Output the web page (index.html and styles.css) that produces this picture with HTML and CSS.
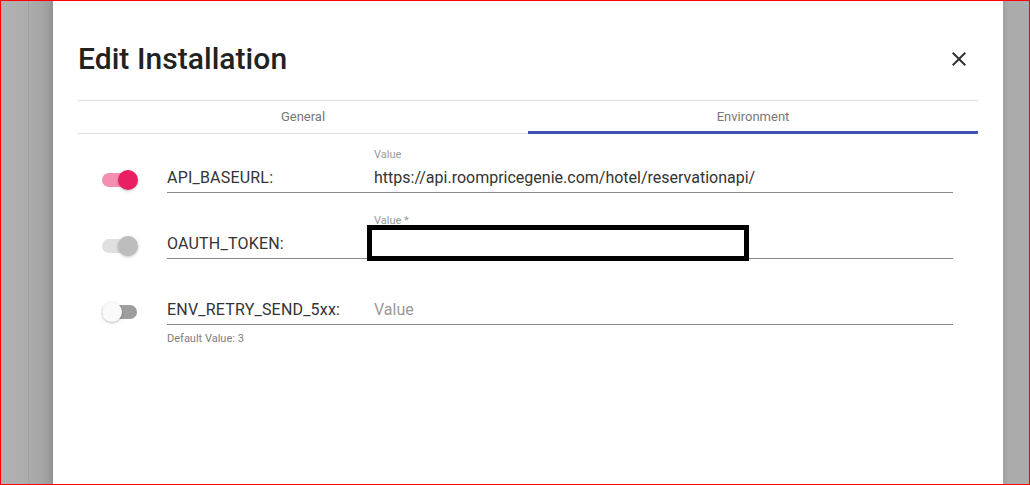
FILE: index.html
```html
<!DOCTYPE html>
<html>
<head>
<meta charset="utf-8">
<link rel="stylesheet" href="styles.css">
</head>
<body>
<div class="frame">
  <div class="dialog">
    <div class="header">
      <h1 class="title">Edit Installation</h1>
      <button class="close" aria-label="Close">
        <svg width="24" height="24" viewBox="0 0 24 24"><path fill="#333" d="M19 6.41L17.59 5 12 10.59 6.41 5 5 6.41 10.59 12 5 17.59 6.41 19 12 13.41 17.59 19 19 17.59 13.41 12z"/></svg>
      </button>
    </div>
    <div class="tabs">
      <div class="tab">General</div>
      <div class="tab active">Environment</div>
    </div>
    <div class="rows">
      <div class="row">
        <div class="switch on"><span class="track"></span><span class="thumb"></span></div>
        <div class="field">
          <div class="name"><span class="name-text">API_BASEURL:</span></div>
          <div class="value">
            <div class="small">Value</div>
            <div class="input">https://api.roompricegenie.com/hotel/reservationapi/</div>
          </div>
        </div>
      </div>
      <div class="row">
        <div class="switch disabled"><span class="track"></span><span class="thumb"></span></div>
        <div class="field">
          <div class="name"><span class="name-text">OAUTH_TOKEN:</span></div>
          <div class="value">
            <div class="small">Value *</div>
            <div class="input"></div>
            <div class="redact"></div>
          </div>
        </div>
      </div>
      <div class="row">
        <div class="switch off"><span class="track"></span><span class="thumb"></span></div>
        <div class="field">
          <div class="name"><span class="name-text">ENV_RETRY_SEND_5xx:</span></div>
          <div class="value">
            <div class="small"></div>
            <div class="input placeholder">Value</div>
          </div>
        </div>
      </div>
      <div class="helper">Default Value: 3</div>
    </div>
  </div>
</div>
</body>
</html>
```
FILE: styles.css
```css
* { box-sizing: border-box; }
html, body { margin: 0; padding: 0; }
body { font-family: Roboto, "Liberation Sans", sans-serif; }

.frame {
  width: 1030px;
  height: 485px;
  border: 1px solid #ff0000;
  overflow: hidden;
  padding-left: 52px;
  background:
    linear-gradient(to right,
      #b1b1b1 0px, #adadad 27px, #a2a2a2 27px, #a2a2a2 28px,
      #acacac 28px, #a6a6a6 40px, #9a9a9a 52px,
      #9a9a9a 952px, #a6a6a6 965px, #ababab 978px);
}

.dialog {
  width: 950px;
  height: 100%;
  background: #fff;
  padding: 38px 25px 0 25px;
  box-shadow: 0 0 6px rgba(0,0,0,0.15);
}

.header {
  display: flex;
  align-items: center;
  justify-content: space-between;
  height: 40px;
}
.title {
  margin: 0;
  font-size: 30px;
  line-height: 40px;
  font-weight: 500;
  color: #222;
  letter-spacing: 0.05px;
}
.close {
  border: 0;
  background: none;
  padding: 0;
  width: 24px;
  height: 24px;
  margin-right: 7px;
  display: flex;
}

.tabs {
  margin-top: 21px;
  display: flex;
  border-top: 1px solid #e0e0e0;
  border-bottom: 1px solid #e0e0e0;
}
.tab {
  flex: 1;
  height: 32px;
  padding-bottom: 2px;
  display: flex;
  align-items: center;
  justify-content: center;
  font-size: 13px;
  color: #777;
  position: relative;
}
.tab.active::after {
  content: "";
  position: absolute;
  left: 0;
  right: 0;
  bottom: -1px;
  height: 3px;
  background: #3f51b5;
}

.rows {
  padding: 13px 25px 0 24px;
  display: flex;
  flex-direction: column;
  gap: 20px;
}
.row {
  display: flex;
  align-items: flex-end;
}

.switch {
  position: relative;
  width: 36px;
  height: 20px;
  margin-bottom: 3px;
  margin-right: 29px;
  flex: none;
}
.switch .track {
  position: absolute;
  left: 0;
  top: 3px;
  width: 35px;
  height: 14px;
  border-radius: 7px;
}
.switch .thumb {
  position: absolute;
  top: 0;
  width: 20px;
  height: 20px;
  border-radius: 50%;
  box-shadow: 0 1px 3px rgba(0,0,0,0.25);
}
.switch.on .track { background: #f48fb1; }
.switch.on .thumb { left: 16px; background: #e91e63; }
.switch.disabled .track { background: #e0e0e0; }
.switch.disabled .thumb { left: 16px; background: #bdbdbd; }
.switch.off .track { background: #9e9e9e; }
.switch.off .thumb { left: 0; background: #fafafa; }

.field {
  flex: 1;
  display: flex;
  border-bottom: 1px solid #8a8a8a;
}
.name {
  width: 207px;
  flex: none;
  padding-top: 16px;
}
.name-text {
  display: flex;
  align-items: center;
  height: 29px;
  font-size: 16px;
  letter-spacing: 0.2px;
  color: #333;
}
.value {
  flex: 1;
  position: relative;
}
.small {
  height: 16px;
  font-size: 11px;
  line-height: 16px;
  color: #9a9a9a;
}
.input {
  height: 29px;
  display: flex;
  align-items: center;
  font-size: 16px;
  color: #333;
}
.input.placeholder { color: #9a9a9a; }

.redact {
  position: absolute;
  left: -7px;
  top: 12px;
  width: 382px;
  height: 36px;
  border: 5px solid #000;
  background: #fff;
}

.helper {
  margin-top: -13px;
  margin-left: 65px;
  font-size: 11px;
  line-height: 13px;
  color: #808080;
}
```
